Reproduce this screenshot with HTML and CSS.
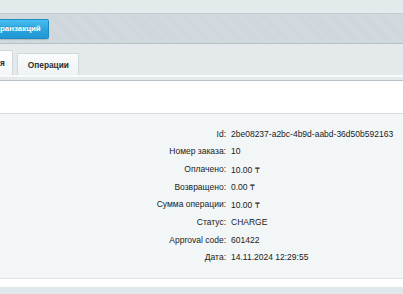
FILE: index.html
```html
<!DOCTYPE html>
<html lang="ru">
<head>
<meta charset="utf-8">
<link rel="stylesheet" href="styles.css">
</head>
<body>
<div class="top"></div>
<div class="toolbar">
  <a class="btn">ранзакций</a>
</div>
<div class="tabs">
  <div class="tab tab-first">я</div>
  <div class="tab">Операции</div>
</div>
<div class="tabline"></div>
<div class="gap"></div>
<div class="panel">
  <div class="grid">
    <div class="lbl">Id:</div><div class="val">2be08237-a2bc-4b9d-aabd-36d50b592163</div>
    <div class="lbl">Номер заказа:</div><div class="val">10</div>
    <div class="lbl">Оплачено:</div><div class="val">10.00 ₸</div>
    <div class="lbl">Возвращено:</div><div class="val">0.00 ₸</div>
    <div class="lbl">Сумма операции:</div><div class="val">10.00 ₸</div>
    <div class="lbl">Статус:</div><div class="val">CHARGE</div>
    <div class="lbl">Approval code:</div><div class="val">601422</div>
    <div class="lbl">Дата:</div><div class="val">14.11.2024 12:29:55</div>
  </div>
</div>
<div class="after"></div>
<div class="bottom"></div>
</body>
</html>
```

FILE: styles.css
```css
html, body {
  margin: 0;
  padding: 0;
  background: #ffffff;
  font-family: "Liberation Sans", Arial, sans-serif;
  overflow: hidden;
}
.top {
  height: 13px;
  background: #e3eaec;
  border-bottom: 1px solid #c3cdd1;
}
.toolbar {
  height: 29px;
  background-color: #cdd6da;
  background-image: repeating-linear-gradient(45deg, rgba(255,255,255,0.12) 0 1px, transparent 1px 2px);
  border-bottom: 1px solid #b6c1c6;
  display: flex;
  align-items: center;
}
.btn {
  display: block;
  flex: none;
  width: 37px;
  height: 18px;
  line-height: 18px;
  padding: 0 11px 0 0;
  font-size: 7.9px;
  font-weight: bold;
  color: #ffffff;
  background: linear-gradient(#48bdf0, #2aa3dd 55%, #1f97d4);
  border: 1px solid #1e8cc4;
  border-left: none;
  border-radius: 0 2px 2px 0;
  box-shadow: 0 1px 1px rgba(0,0,0,0.15);
  text-shadow: 0 -1px 0 rgba(0,0,0,0.15);
  white-space: nowrap;
}
.tabs {
  height: 31px;
  background: #e4eaec;
  display: flex;
  align-items: flex-end;
  gap: 4px;
}
.tab {
  flex: none;
  font-size: 8.3px;
  font-weight: bold;
  color: #2b2f31;
  background: linear-gradient(#fbfcfc, #eef2f3);
  border: 1px solid #cfd7da;
  border-bottom: none;
  border-radius: 2px 2px 0 0;
  height: 21px;
  line-height: 22px;
  padding: 0 9px 0 10px;
}
.tab-first {
  border-left: none;
  border-radius: 0 2px 0 0;
  padding: 0 7px 0 0;
  height: 24px;
  line-height: 25px;
  background: linear-gradient(#ffffff, #f4f6f7);
}
.tabline {
  height: 2px;
  background: #f8fafa;
  border-bottom: 3px solid #e5eaec;
  box-shadow: 0 1px 0 #b7c1c5;
  margin-bottom: 1px;
}
.gap {
  height: 32px;
  background: #ffffff;
}
.panel {
  background: #f3f6f7;
  border-top: 1px solid #d5dcdf;
  border-bottom: 1px solid #dfe4e6;
  padding: 11px 0 12px;
}
.grid {
  display: grid;
  grid-template-columns: 226px auto;
  grid-auto-rows: 17.67px;
  align-items: center;
  font-size: 8.5px;
  color: #1a1a1a;
}
.lbl {
  text-align: right;
}
.val {
  padding-left: 5px;
}
.after {
  height: 8px;
  background: #ffffff;
}
.bottom {
  height: 20px;
  background: #e1e8eb;
}
```
